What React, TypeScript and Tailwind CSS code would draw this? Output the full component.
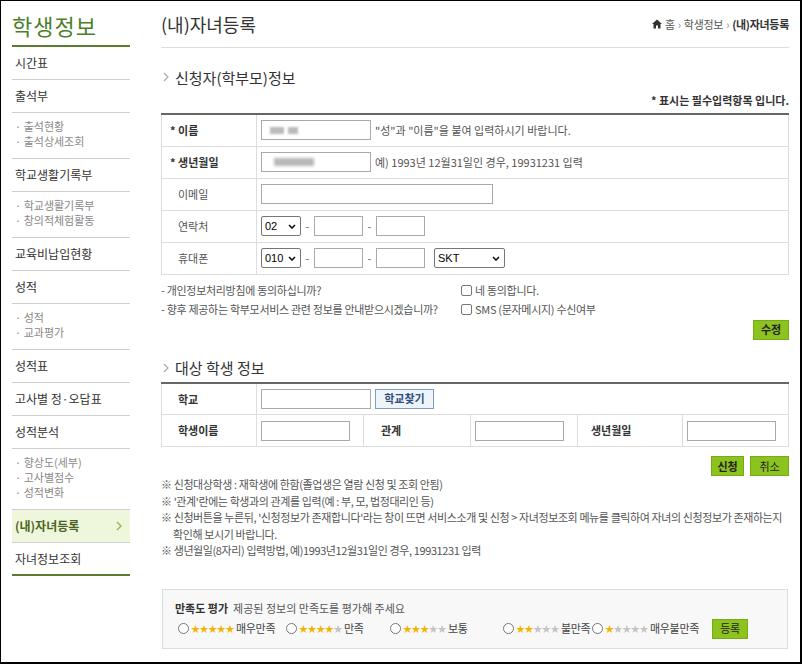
const KR = "font-['Noto_Sans_CJK_KR','Noto_Sans',sans-serif]";

type MenuItem = { label: string; subs?: string[]; active?: boolean };

const MENU: MenuItem[] = [
  { label: "시간표" },
  { label: "출석부", subs: ["출석현황", "출석상세조회"] },
  { label: "학교생활기록부", subs: ["학교생활기록부", "창의적체험활동"] },
  { label: "교육비납입현황" },
  { label: "성적", subs: ["성적", "교과평가"] },
  { label: "성적표" },
  { label: "고사별 정·오답표" },
  { label: "성적분석", subs: ["향상도(세부)", "고사별점수", "성적변화"] },
  { label: "(내)자녀등록", active: true },
  { label: "자녀정보조회" },
];

const RATINGS = [
  { n: 5, label: "매우만족", w: "w-[108px]" },
  { n: 4, label: "만족", w: "w-[104px]" },
  { n: 3, label: "보통", w: "w-[113px]" },
  { n: 2, label: "불만족", w: "w-[89px]" },
  { n: 1, label: "매우불만족", w: "w-[120px]" },
];

function Chevron({ className = "" }: { className?: string }) {
  return (
    <svg width="6" height="10" viewBox="0 0 6 10" className={className}>
      <polyline points="1,1 5,5 1,9" fill="none" stroke="currentColor" strokeWidth="1.2" />
    </svg>
  );
}

function Input({ w, blur }: { w: string; blur?: string }) {
  return (
    <div className={`${w} h-[20px] border border-[#a9a9a9] bg-white flex items-center px-[6px]`}>
      {blur && <div className={`${blur} h-[8px] bg-[#b8b8b8] blur-[1.5px]`} />}
    </div>
  );
}

function Select({ w, value }: { w: string; value: string }) {
  return (
    <div className={`${w} h-[20px] border border-[#767676] rounded-[2px] bg-white flex items-center justify-between pl-[3px] pr-[4px] font-['Liberation_Sans',sans-serif] text-[11px] text-black`}>
      <span>{value}</span>
      <svg width="8" height="5" viewBox="0 0 8 5">
        <polyline points="1,1 4,4 7,1" fill="none" stroke="#111" strokeWidth="1.6" />
      </svg>
    </div>
  );
}

function GreenBtn({ label, bold = true, w = "w-[36px]" }: { label: string; bold?: boolean; w?: string }) {
  return (
    <button className={`${w} shrink-0 h-[20px] bg-[#8cc31e] border border-[#78a918] text-[11px] text-[#222] leading-none ${bold ? "font-bold" : ""}`}>
      {label}
    </button>
  );
}

function Dash() {
  return <span className="w-[13px] text-center text-[#666] text-[11px]">-</span>;
}

function Box() {
  return <span className="w-[11px] h-[11px] border border-[#777] rounded-[2px] bg-white inline-block" />;
}

export default function App() {
  return (
    <div className={`w-[802px] h-[664px] bg-white border-black border-t border-l border-r-2 border-b-2 flex overflow-hidden ${KR}`}>
      {/* Sidebar */}
      <aside className="w-[118px] ml-[11px] shrink-0">
        <div className="h-[46px] pt-[11px] border-b-2 border-[#5b7c31]">
          <h1 className="text-[22px] leading-[26px] text-[#4b7f2a] font-normal tracking-[1px]">학생정보</h1>
        </div>
        {MENU.map((m, i) => (
          <div key={m.label}>
            <div
              className={`h-[33px] flex items-center justify-between pl-[3px] pr-[8px] text-[12px] ${
                i === MENU.length - 1 ? "border-b-2 border-[#5b7c31]" : "border-b border-[#cfcfcf]"
              } ${m.active ? "bg-[#eef7dc] font-bold text-[#4a6420]" : "text-[#333]"}`}
            >
              <span>{m.label}</span>
              {m.active && <Chevron className="text-[#8bb53d]" />}
            </div>
            {m.subs && (
              <div className="pt-[6px] pb-[9px] border-b border-[#cfcfcf]">
                {m.subs.map((s) => (
                  <div key={s} className="pl-[3px] text-[11px] leading-[15px] text-[#888]">
                    · {s}
                  </div>
                ))}
              </div>
            )}
          </div>
        ))}
      </aside>

      {/* Main */}
      <main className="ml-[31px] w-[628px] shrink-0">
        <div className="h-[47px] border-b border-[#dcdcdc] flex items-center justify-between">
          <h2 className="text-[18px] text-[#333] leading-none">(내)자녀등록</h2>
          <div className="flex items-center gap-[3px] text-[11px] text-[#555] tracking-[-0.3px]">
            <svg width="10" height="10" viewBox="0 0 10 10">
              <path d="M5 0.5 L10 5 H8.5 V9.5 H6 V6.5 H4 V9.5 H1.5 V5 H0 Z" fill="#333" />
            </svg>
            <span>홈</span>
            <span className="text-[#888]">›</span>
            <span>학생정보</span>
            <span className="text-[#888]">›</span>
            <span className="font-bold text-[#333]">(내)자녀등록</span>
          </div>
        </div>

        {/* Applicant */}
        <div className="mt-[19px] flex items-center gap-[6px] h-[20px]">
          <Chevron className="text-[#aaa] ml-[2px]" />
          <h3 className="text-[15px] text-[#333] leading-none">신청자(학부모)정보</h3>
        </div>
        <p className="mt-[6px] text-right text-[11px] leading-[14px] font-bold text-[#333]">* 표시는 필수입력항목 입니다.</p>

        <table className="mt-[6px] w-full border-collapse border-t-2 border-t-[#666] text-[11px] text-[#555]">
          <tbody>
            <tr className="h-[32px] border-b border-[#ddd]">
              <th className="w-[95px] border-l border-r border-[#ddd] pl-[8px] text-left font-bold text-[#333]">* 이름</th>
              <td className="border-r border-[#ddd] pl-[4px]">
                <div className="flex items-center gap-[4px]">
                  <div className="w-[110px] h-[20px] border border-[#a9a9a9] flex items-center pl-[8px] gap-[4px]">
                    <div className="w-[14px] h-[7px] bg-[#bbb] blur-[1px]" />
                    <div className="w-[10px] h-[7px] bg-[#bbb] blur-[1px]" />
                  </div>
                  <span>"성"과 "이름"을 붙여 입력하시기 바랍니다.</span>
                </div>
              </td>
            </tr>
            <tr className="h-[32px] border-b border-[#ddd]">
              <th className="border-l border-r border-[#ddd] pl-[8px] text-left font-bold text-[#333]">* 생년월일</th>
              <td className="border-r border-[#ddd] pl-[4px]">
                <div className="flex items-center gap-[4px]">
                  <Input w="w-[110px]" blur="w-[40px] ml-[6px]" />
                  <span>예) 1993년 12월31일인 경우, 19931231 입력</span>
                </div>
              </td>
            </tr>
            <tr className="h-[32px] border-b border-[#ddd]">
              <th className="border-l border-r border-[#ddd] pl-[16px] text-left font-normal text-[#555]">이메일</th>
              <td className="border-r border-[#ddd] pl-[4px]">
                <Input w="w-[232px]" />
              </td>
            </tr>
            <tr className="h-[32px] border-b border-[#ddd]">
              <th className="border-l border-r border-[#ddd] pl-[16px] text-left font-normal text-[#555]">연락처</th>
              <td className="border-r border-[#ddd] pl-[4px]">
                <div className="flex items-center">
                  <Select w="w-[40px]" value="02" />
                  <Dash />
                  <Input w="w-[49px]" />
                  <Dash />
                  <Input w="w-[49px]" />
                </div>
              </td>
            </tr>
            <tr className="h-[32px] border-b border-[#ddd]">
              <th className="border-l border-r border-[#ddd] pl-[16px] text-left font-normal text-[#555]">휴대폰</th>
              <td className="border-r border-[#ddd] pl-[4px]">
                <div className="flex items-center">
                  <Select w="w-[40px]" value="010" />
                  <Dash />
                  <Input w="w-[49px]" />
                  <Dash />
                  <Input w="w-[49px]" />
                  <div className="w-[9px]" />
                  <Select w="w-[71px]" value="SKT" />
                </div>
              </td>
            </tr>
          </tbody>
        </table>

        <div className="mt-[6px] text-[11px] leading-[19px] text-[#555] tracking-[-0.3px]">
          <div className="flex">
            <span className="w-[300px]">- 개인정보처리방침에 동의하십니까?</span>
            <span className="flex items-center gap-[3px]"><Box />네 동의합니다.</span>
          </div>
          <div className="flex">
            <span className="w-[300px]">- 향후 제공하는 학부모서비스 관련 정보를 안내받으시겠습니까?</span>
            <span className="flex items-center gap-[3px]"><Box />SMS (문자메시지) 수신여부</span>
          </div>
        </div>
        <div className="mt-[1px] flex justify-end">
          <GreenBtn label="수정" />
        </div>

        {/* Student */}
        <div className="mt-[18px] flex items-center gap-[6px] h-[20px]">
          <Chevron className="text-[#aaa] ml-[2px]" />
          <h3 className="text-[15px] text-[#333] leading-none">대상 학생 정보</h3>
        </div>
        <table className="mt-[4px] w-full border-collapse border-t-2 border-t-[#666] text-[11px] text-[#333]">
          <tbody>
            <tr className="h-[32px] border-b border-[#ddd]">
              <th className="w-[95px] border-l border-r border-[#ddd] pl-[16px] text-left font-bold">학교</th>
              <td colSpan={5} className="border-r border-[#ddd] pl-[4px]">
                <div className="flex items-center gap-[4px]">
                  <Input w="w-[110px]" />
                  <button className="w-[59px] h-[20px] bg-[#eef4fa] border border-[#7d9ec2] text-[11px] font-bold text-[#2b4d7c] leading-none">
                    학교찾기
                  </button>
                </div>
              </td>
            </tr>
            <tr className="h-[32px] border-b border-[#ddd]">
              <th className="border-l border-r border-[#ddd] pl-[16px] text-left font-bold">학생이름</th>
              <td className="w-[107px] border-r border-[#ddd] pl-[4px]"><Input w="w-[89px]" /></td>
              <th className="w-[107px] border-r border-[#ddd] pl-[17px] text-left font-bold">관계</th>
              <td className="w-[107px] border-r border-[#ddd] pl-[4px]"><Input w="w-[89px]" /></td>
              <th className="w-[105px] border-r border-[#ddd] pl-[13px] text-left font-bold">생년월일</th>
              <td className="border-r border-[#ddd] pl-[4px]"><Input w="w-[89px]" /></td>
            </tr>
          </tbody>
        </table>
        <div className="mt-[9px] flex justify-end gap-[6px]">
          <GreenBtn label="신청" w="w-[33px]" />
          <GreenBtn label="취소" bold={false} w="w-[39px]" />
        </div>

        <ul className="text-[11px] leading-[16.5px] text-[#555] tracking-[-0.4px]">
          <li>※ 신청대상학생 : 재학생에 한함(졸업생은 열람 신청 및 조회 안됨)</li>
          <li>※ '관계'란에는 학생과의 관계를 입력(예 : 부, 모, 법정대리인 등)</li>
          <li className="pl-[12px] -indent-[12px] whitespace-nowrap">
            ※ 신청버튼을 누른뒤, '신청정보가 존재합니다'라는 창이 뜨면 서비스소개 및 신청 &gt; 자녀정보조회 메뉴를 클릭하여 자녀의 신청정보가 존재하는지
            <br />
            확인해 보시기 바랍니다.
          </li>
          <li>※ 생년월일(8자리) 입력방법, 예)1993년12월31일인 경우, 19931231 입력</li>
        </ul>

        {/* Satisfaction */}
        <div className="mt-[30px] ml-[1px] w-[626px] h-[60px] border border-[#ddd] bg-[#f8f8f8] pl-[12px] pt-[10px]">
          <div className="text-[11px] leading-[16px] text-[#555]">
            <span className="font-bold text-[#333]">만족도 평가</span>
            <span className="ml-[5px]">제공된 정보의 만족도를 평가해 주세요</span>
          </div>
          <div className="mt-[3px] pl-[3px] flex items-center text-[11px] text-[#444] tracking-[-0.3px]">
            {RATINGS.map((r) => (
              <label key={r.label} className={`${r.w} shrink-0 flex items-center whitespace-nowrap`}>
                <span className="w-[11px] h-[11px] shrink-0 rounded-full border border-[#777] bg-white mr-[2px]" />
                <span className="flex shrink-0">
                  {[1, 2, 3, 4, 5].map((k) => (
                    <span key={k} className={`w-[8.6px] text-center text-[9px] leading-none ${k <= r.n ? "text-[#f2b400]" : "text-[#c4c4c4]"}`}>★</span>
                  ))}
                </span>
                <span className="ml-[2px]">{r.label}</span>
              </label>
            ))}
            <GreenBtn label="등록" bold={false} />
          </div>
        </div>
      </main>
    </div>
  );
}
